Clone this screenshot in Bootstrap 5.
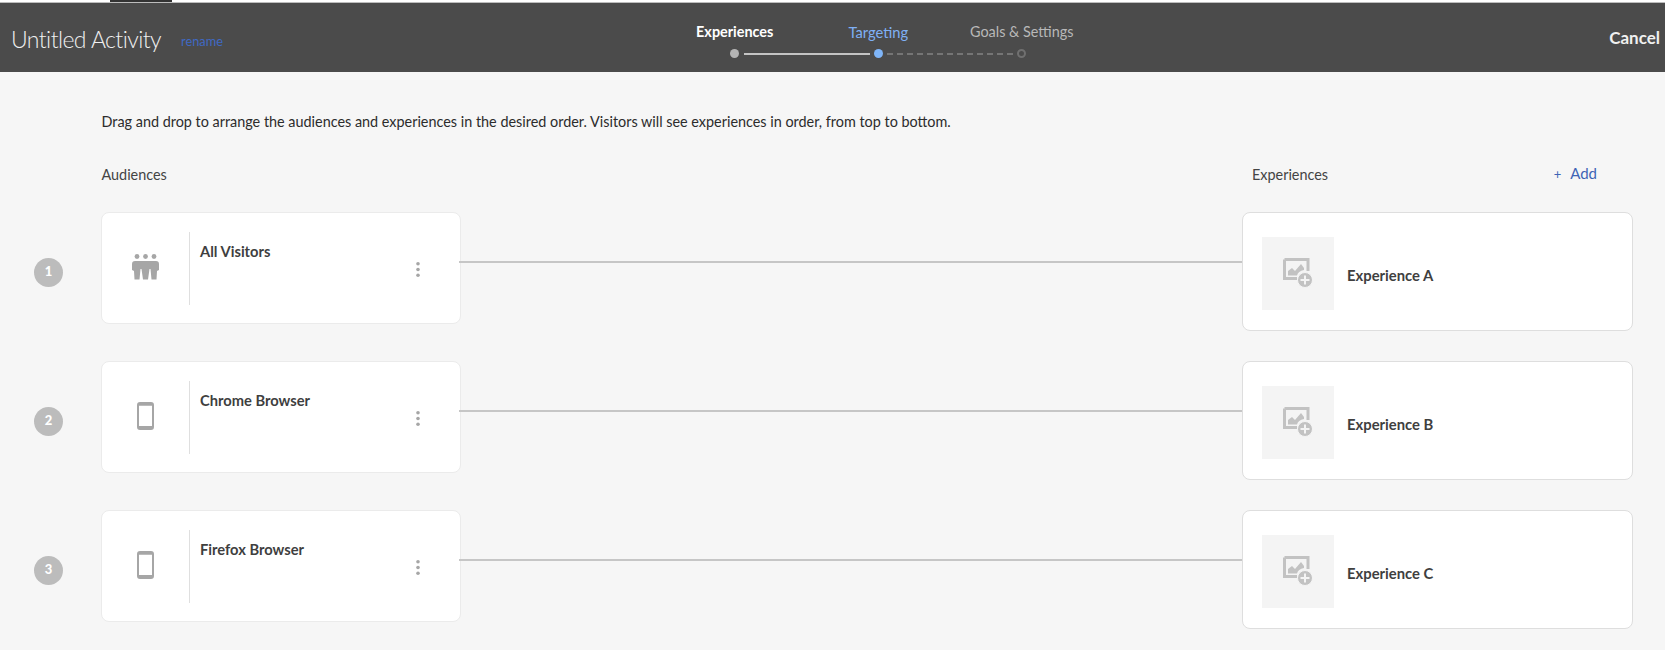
<!DOCTYPE html>
<html lang="en">
<head>
<meta charset="utf-8">
<title>Untitled Activity</title>
<link href="https://cdn.jsdelivr.net/npm/bootstrap@5.3.0/dist/css/bootstrap.min.css" rel="stylesheet">
<style>
body{background:#f6f6f6;font-family:Lato,"Open Sans",sans-serif;color:#2c2c2c;font-size:14.4px;min-height:650px;overflow:hidden}
.top-strip{height:3px;background:#fff;border-bottom:1px solid #bdbdbd}
.top-tab{width:62px;height:2px;margin-left:110px;background:#333}
.app-head{height:69px;background:#4b4b4b;color:#fff}
.head-left{width:663px;padding-left:11px}
.act-title{font-family:Lato,sans-serif;font-weight:300;font-size:23px;letter-spacing:-.57px;line-height:30px;margin:2px 0 0;color:#f0f0f0}
.act-rename{font-size:12.800px;color:#3f69c4;margin-left:20px;margin-top:8px;text-decoration:none}
.stepper{display:grid;grid-template-columns:repeat(3,143.5px)}
.step{position:relative;height:69px;text-align:center;font-size:14.400px;padding-top:19px;line-height:20px}
.step-a{color:#fff;font-weight:700}.step-b{color:#7fb0f5;font-size:14.700px}.step-c{color:#b8b8b8}
.step-dot{position:absolute;left:50%;top:46px;width:9px;height:9px;margin-left:-4.5px;border-radius:50%;background:#b4b4b4}
.step-b .step-dot{background:#7fb5f8}
.step-c .step-dot{background:transparent;border:2px solid #707070}
.step-line{position:absolute;left:calc(50% + 9px);width:126px;top:49.5px;border-top:2px solid #c4c4c4}
.step-b .step-line{border-top:2px dashed #757575}
.act-cancel{margin-left:auto;padding-right:5px;font-size:17px;font-weight:700;color:#f0f0f0;text-decoration:none}
.work{padding:0 32px 0 34px}
.intro{padding-left:67.5px;padding-top:40px;line-height:20px;color:#2c2c2c}
.col-heads{padding-left:67.5px;margin-top:33px;line-height:20px;color:#444}
.col-heads-right{width:391px;padding-left:10px}
.add-link{margin-left:auto;margin-right:36px;margin-top:-2.5px;color:#3f64b5;text-decoration:none;font-size:15px}
.add-plus{font-size:13px;margin-right:9px}
.map-list{margin-top:27px;gap:30px}
.map-row{height:119px}
.num-badge{width:29px;height:29px;margin-top:45.5px;margin-right:38px;background:#bcbcbc;color:#fff;font-size:13px;font-weight:900}
.aud-card{width:360px;height:112px;border-radius:8px;border:1px solid #ebebeb;flex:none}
.aud-icon{width:88px;height:73px;margin-top:19px;border-right:1px solid #dfdfdf;flex:none}
.aud-icon svg{margin-bottom:3px}
.aud-name{padding-left:10px;padding-top:8px;margin-top:20px;font-size:14.700px;font-weight:700;line-height:20px;color:#3f3f3f;flex:1}
.aud-more{width:6px;margin-right:39px;margin-top:49px;flex:none;display:block}
.link-line{height:2px;margin-top:49px;margin-left:-2px;background:#c6c6c6;flex:1;position:relative}
.exp-card{width:391px;height:119px;border-radius:8px;border:1px solid #dedede;flex:none;padding:0 19px}
.exp-thumb{width:72px;height:73px;margin-top:3px;background:#f4f4f4;flex:none}
.exp-name{margin-left:13px;margin-top:8px;font-weight:700;color:#3f3f3f;font-size:14.800px}
</style>
</head>
<body>
<div class="top-strip"><div class="top-tab"></div></div>
<header class="app-head d-flex align-items-center">
  <div class="head-left d-flex align-items-center">
    <h1 class="act-title">Untitled Activity</h1>
    <a class="act-rename" href="#">rename</a>
  </div>
  <div class="stepper">
    <div class="step step-a">Experiences<span class="step-dot"></span><span class="step-line"></span></div>
    <div class="step step-b">Targeting<span class="step-dot"></span><span class="step-line"></span></div>
    <div class="step step-c">Goals &amp; Settings<span class="step-dot"></span></div>
  </div>
  <a class="act-cancel" href="#">Cancel</a>
</header>
<main class="work">
  <p class="intro mb-0">Drag and drop to arrange the audiences and experiences in the desired order. Visitors will see experiences in order, from top to bottom.</p>
  <div class="col-heads d-flex justify-content-between">
    <span>Audiences</span>
    <div class="col-heads-right d-flex"><span>Experiences</span><a class="add-link" href="#"><span class="add-plus">+</span>Add</a></div>
  </div>
  <div class="map-list d-flex flex-column">

    <div class="map-row d-flex align-items-start">
      <div class="num-badge rounded-circle d-flex align-items-center justify-content-center flex-none">1</div>
      <div class="aud-card card flex-row">
        <div class="aud-icon d-flex align-items-center justify-content-center">
          <svg width="27" height="26" viewBox="0 0 27 26" fill="#a6a6a6"><circle cx="5" cy="2.500" r="2.400"/><circle cx="13.500" cy="2.500" r="2.400"/><circle cx="22" cy="2.500" r="2.400"/><path d="M0 10Q0 7 3 7H24Q27 7 27 10V16L25 17 24.500 25.500H19.500L18.500 15H17.500L16 25.500H11L9.500 15H8.500L7.500 25.500H2.500L2 17 0 16Z"/></svg>
        </div>
        <div class="aud-name">All Visitors</div>
        <svg class="aud-more" width="6" height="15" viewBox="0 0 6 15" fill="#a6a6a6"><circle cx="3" cy="1.800" r="1.800"/><circle cx="3" cy="7.500" r="1.800"/><circle cx="3" cy="13.200" r="1.800"/></svg>
      </div>
      <div class="link-line"></div>
      <div class="exp-card card flex-row align-items-center">
        <div class="exp-thumb d-flex align-items-center justify-content-center">
          <svg width="30" height="31" viewBox="0 0 30 31" fill="none"><path d="M1.500 1.500H25V13M14 20.500H1.500V1.500" stroke="#c2c2c2" stroke-width="3"/><path d="M5 17.500V13L9 10L12 13L18 6L21 10V12Q15 13 14 17.500Z" fill="#c2c2c2"/><circle cx="22" cy="22" r="7.500" fill="#c2c2c2" stroke="#f4f4f4" stroke-width="1"/><path d="M22 17.500V26.500M17.500 22H26.500" stroke="#f4f4f4" stroke-width="2"/></svg>
        </div>
        <div class="exp-name">Experience A</div>
      </div>
    </div>

    <div class="map-row d-flex align-items-start">
      <div class="num-badge rounded-circle d-flex align-items-center justify-content-center flex-none">2</div>
      <div class="aud-card card flex-row">
        <div class="aud-icon d-flex align-items-center justify-content-center">
          <svg width="17" height="28" viewBox="0 0 17 28" fill="none"><rect x="1" y="1" width="15" height="26" rx="2" stroke="#a6a6a6" stroke-width="2"/><path d="M1 2.800H16M1 25H16" stroke="#a6a6a6" stroke-width="2"/></svg>
        </div>
        <div class="aud-name">Chrome Browser</div>
        <svg class="aud-more" width="6" height="15" viewBox="0 0 6 15" fill="#a6a6a6"><circle cx="3" cy="1.800" r="1.800"/><circle cx="3" cy="7.500" r="1.800"/><circle cx="3" cy="13.200" r="1.800"/></svg>
      </div>
      <div class="link-line"></div>
      <div class="exp-card card flex-row align-items-center">
        <div class="exp-thumb d-flex align-items-center justify-content-center">
          <svg width="30" height="31" viewBox="0 0 30 31" fill="none"><path d="M1.500 1.500H25V13M14 20.500H1.500V1.500" stroke="#c2c2c2" stroke-width="3"/><path d="M5 17.500V13L9 10L12 13L18 6L21 10V12Q15 13 14 17.500Z" fill="#c2c2c2"/><circle cx="22" cy="22" r="7.500" fill="#c2c2c2" stroke="#f4f4f4" stroke-width="1"/><path d="M22 17.500V26.500M17.500 22H26.500" stroke="#f4f4f4" stroke-width="2"/></svg>
        </div>
        <div class="exp-name">Experience B</div>
      </div>
    </div>

    <div class="map-row d-flex align-items-start">
      <div class="num-badge rounded-circle d-flex align-items-center justify-content-center flex-none">3</div>
      <div class="aud-card card flex-row">
        <div class="aud-icon d-flex align-items-center justify-content-center">
          <svg width="17" height="28" viewBox="0 0 17 28" fill="none"><rect x="1" y="1" width="15" height="26" rx="2" stroke="#a6a6a6" stroke-width="2"/><path d="M1 2.800H16M1 25H16" stroke="#a6a6a6" stroke-width="2"/></svg>
        </div>
        <div class="aud-name">Firefox Browser</div>
        <svg class="aud-more" width="6" height="15" viewBox="0 0 6 15" fill="#a6a6a6"><circle cx="3" cy="1.800" r="1.800"/><circle cx="3" cy="7.500" r="1.800"/><circle cx="3" cy="13.200" r="1.800"/></svg>
      </div>
      <div class="link-line"></div>
      <div class="exp-card card flex-row align-items-center">
        <div class="exp-thumb d-flex align-items-center justify-content-center">
          <svg width="30" height="31" viewBox="0 0 30 31" fill="none"><path d="M1.500 1.500H25V13M14 20.500H1.500V1.500" stroke="#c2c2c2" stroke-width="3"/><path d="M5 17.500V13L9 10L12 13L18 6L21 10V12Q15 13 14 17.500Z" fill="#c2c2c2"/><circle cx="22" cy="22" r="7.500" fill="#c2c2c2" stroke="#f4f4f4" stroke-width="1"/><path d="M22 17.500V26.500M17.500 22H26.500" stroke="#f4f4f4" stroke-width="2"/></svg>
        </div>
        <div class="exp-name">Experience C</div>
      </div>
    </div>

  </div>
</main>
<script src="https://cdn.jsdelivr.net/npm/bootstrap@5.3.0/dist/js/bootstrap.bundle.min.js"></script>
</body>
</html>
